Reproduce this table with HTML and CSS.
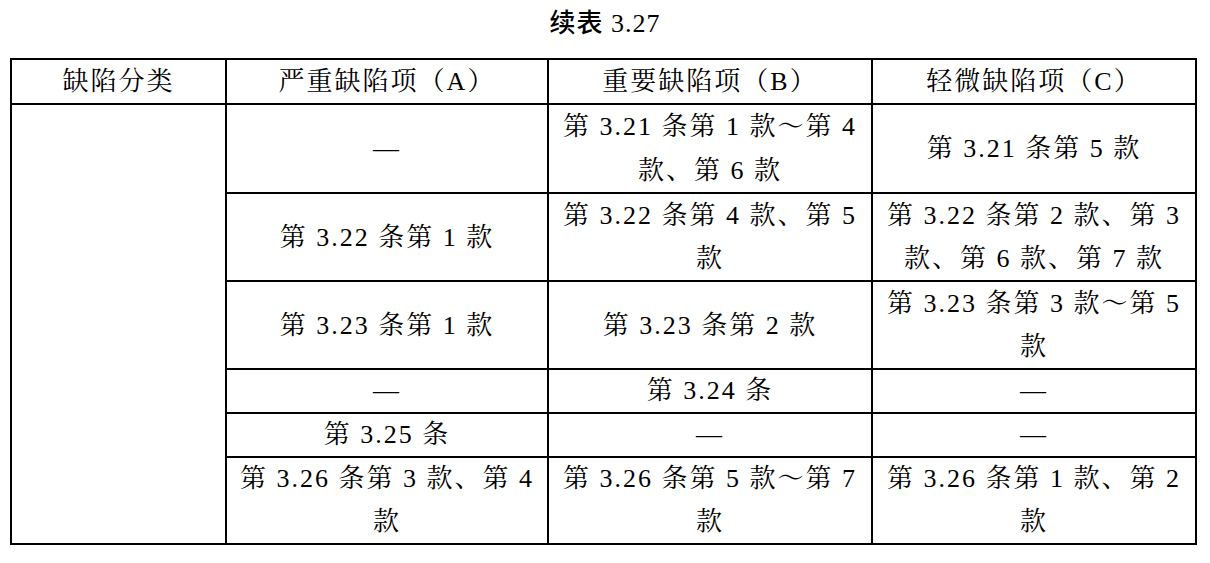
FILE: index.html
```html
<!DOCTYPE html>
<html lang="zh-CN">
<head>
<meta charset="utf-8">
<title>续表 3.27</title>
<link rel="stylesheet" href="styles.css">
</head>
<body>
<div class="title"><span class="hei">续表</span> 3.27</div>
<table class="spec">
  <colgroup>
    <col class="c1"><col class="c2"><col class="c3"><col class="c4">
  </colgroup>
  <thead>
    <tr class="head"><th>缺陷分类</th><th>严重缺陷项（A）</th><th>重要缺陷项（B）</th><th>轻微缺陷项（C）</th></tr>
  </thead>
  <tbody>
    <tr class="dbl first"><td rowspan="6"></td><td>—</td><td>第 3.21 条第 1 款～第 4<br>款、第 6 款</td><td>第 3.21 条第 5 款</td></tr>
    <tr class="dbl"><td>第 3.22 条第 1 款</td><td>第 3.22 条第 4 款、第 5<br>款</td><td>第 3.22 条第 2 款、第 3<br>款、第 6 款、第 7 款</td></tr>
    <tr class="dbl"><td>第 3.23 条第 1 款</td><td>第 3.23 条第 2 款</td><td>第 3.23 条第 3 款～第 5<br>款</td></tr>
    <tr class="sgl"><td>—</td><td>第 3.24 条</td><td>—</td></tr>
    <tr class="sgl"><td>第 3.25 条</td><td>—</td><td>—</td></tr>
    <tr class="dbl last"><td>第 3.26 条第 3 款、第 4<br>款</td><td>第 3.26 条第 5 款～第 7<br>款</td><td>第 3.26 条第 1 款、第 2<br>款</td></tr>
  </tbody>
</table>
</body>
</html>
```

FILE: styles.css
```css
html, body {
  margin: 0;
  padding: 0;
  background: #ffffff;
}

body {
  color: #000000;
  font-family: "Liberation Serif", "Noto Serif CJK SC", "Noto Sans CJK SC", serif;
  font-size: 26px;
}

.title {
  height: 42px;
  line-height: 42px;
  margin-bottom: 16px;
  text-align: center;
  font-size: 26px;
  letter-spacing: 1px;
}

.title .hei {
  font-family: "Noto Sans CJK SC", sans-serif;
  font-weight: 500;
}

.spec {
  margin-left: 10px;
  width: 1187px;
  border-collapse: collapse;
  table-layout: fixed;
  border: 2px solid #000000;
}

.spec .c1 { width: 215px; }
.spec .c2 { width: 322px; }
.spec .c3 { width: 324px; }

.spec th,
.spec td {
  border: 2px solid #000000;
  padding: 0;
  text-align: center;
  vertical-align: middle;
  font-weight: normal;
  letter-spacing: 2px;
  white-space: nowrap;
}

.spec .head th {
  line-height: 43px;
  height: 43px;
}

.spec .sgl td {
  line-height: 42px;
  height: 42px;
}

.spec .dbl td {
  line-height: 43px;
}

.spec .dbl.first td {
  line-height: 43.5px;
}

.spec .dbl.last td {
  line-height: 42.5px;
}
```
